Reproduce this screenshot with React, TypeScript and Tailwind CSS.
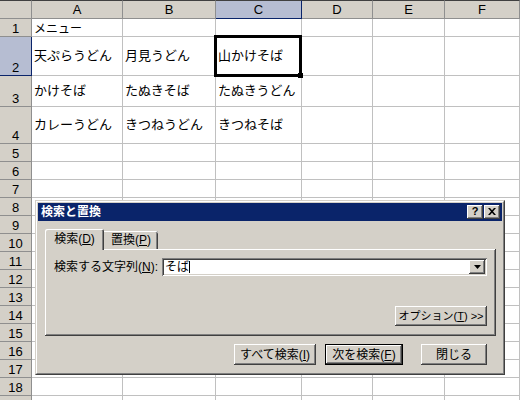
import { Fragment } from "react";

// シート設定
const COLS = ["A", "B", "C", "D", "E", "F"];
const ROWS = Array.from({ length: 19 }, (_, i) => i + 1);
const DATA: Record<number, string[]> = {
  1: ["メニュー"],
  2: ["天ぷらうどん", "月見うどん", "山かけそば"],
  3: ["かけそば", "たぬきそば", "たぬきうどん"],
  4: ["カレーうどん", "きつねうどん", "きつねそば"],
};

const RAISED = "shadow-[inset_-1px_-1px_0_#404040,inset_1px_1px_0_#fff,inset_-2px_-2px_0_#808080]";
const DEFAULT_BTN =
  "shadow-[inset_0_0_0_1px_#000,inset_-2px_-2px_0_#404040,inset_2px_2px_0_#fff,inset_-3px_-3px_0_#808080]";

function Btn({ children, className = "", isDefault = false }: { children: React.ReactNode; className?: string; isDefault?: boolean }) {
  return (
    <div className={`flex items-center justify-center whitespace-nowrap bg-[#d4d0c8] text-black ${isDefault ? DEFAULT_BTN : RAISED} ${className}`}>
      {children}
    </div>
  );
}

export default function App() {
  return (
    <div
      className="relative w-[520px] h-[400px] overflow-hidden bg-white text-black"
      style={{ fontFamily: '"Liberation Sans", "Noto Sans CJK JP", sans-serif' }}
    >
      {/* シート */}
      <div className="grid grid-cols-[32px_91px_93px_86px_71px_72px_1fr] grid-rows-[19px_18px_39px_31px_37px_repeat(15,18px)]">
        <div className="bg-[#d4d0c8] border-t border-r border-b border-t-[#404040] border-r-[#8f8f8f] border-b-[#8f8f8f]" />
        {COLS.map((c) => (
          <div
            key={c}
            className={`flex items-center justify-center pt-[1px] text-[13px] border-t border-r border-b border-t-[#404040] ${
              c === "C" ? "bg-[#b6bdd2] border-r-[#0a246a] border-b-[#0a246a]" : "bg-[#d4d0c8] border-r-[#8f8f8f] border-b-[#8f8f8f]"
            }`}
          >
            {c}
          </div>
        ))}
        {ROWS.map((r) => (
          <Fragment key={r}>
            <div
              className={`flex items-end justify-center pb-[1px] text-[13px] leading-none border-r border-b ${
                r === 2 ? "bg-[#b6bdd2] border-r-[#0a246a] border-b-[#0a246a]" : "bg-[#d4d0c8] border-r-[#8f8f8f] border-b-[#8f8f8f]"
              }`}
            >
              {r < 19 ? r : ""}
            </div>
            {COLS.map((c, i) => (
              <div
                key={c}
                className={`flex items-center pl-[2px] whitespace-nowrap overflow-hidden border-r border-b border-[#c0c0c0] ${
                  r === 1 ? "text-[12px] pt-[2px]" : "text-[13px]"
                }`}
              >
                {DATA[r]?.[i] ?? ""}
              </div>
            ))}
          </Fragment>
        ))}
      </div>

      {/* 選択セル */}
      <div className="absolute left-[214px] top-[35px] w-[88px] h-[42px] border-[3px] border-black pointer-events-none" />
      <div className="absolute left-[298px] top-[73px] w-[5px] h-[5px] bg-black" />

      {/* 検索と置換 ダイアログ */}
      <div className="absolute left-[35px] top-[200px] w-[470px] h-[175px] bg-[#d4d0c8] border border-t-[#d4d0c8] border-l-[#d4d0c8] border-r-[#404040] border-b-[#404040]">
        <div className="h-full border border-t-white border-l-white border-r-[#808080] border-b-[#808080] p-px flex flex-col">
          {/* タイトルバー */}
          <div className="h-[18px] bg-[#0a246a] flex items-center justify-between pl-[3px] pr-[2px]">
            <span className="text-white font-bold text-[12px] leading-none">検索と置換</span>
            <div className="flex gap-[1px]">
              <Btn className="w-[16px] h-[14px]">
                <span className="font-bold text-[11px] leading-none -mt-px">?</span>
              </Btn>
              <Btn className="w-[16px] h-[14px]">
                <svg width="8" height="7" viewBox="0 0 8 7" className="-mt-px">
                  <path d="M0 0h2l2 2.2L6 0h2L5 3.5 8 7H6L4 4.8 2 7H0l3-3.5z" fill="#000" />
                </svg>
              </Btn>
            </div>
          </div>

          {/* タブ */}
          <div className="ml-[7px] mr-[6px] mt-[8px]">
            <div className="flex items-end -mb-px relative z-10">
              <div className="h-[21px] w-[59px] flex items-center justify-center pb-[2px] text-[12px] bg-[#d4d0c8] rounded-tl-[2px] rounded-tr-[2px] shadow-[inset_1px_1px_0_#fff,inset_-1px_0_0_#404040,inset_-2px_0_0_#808080]">
                検索(<span className="underline">D</span>)
              </div>
              <div className="h-[18px] w-[54px] mb-px flex items-center justify-center text-[12px] rounded-tr-[2px] shadow-[inset_0_1px_0_#fff,inset_-1px_0_0_#404040,inset_-2px_0_0_#808080]">
                置換(<span className="underline">P</span>)
              </div>
            </div>
            <div className={`h-[87px] px-[9px] pt-[9px] flex flex-col ${RAISED}`}>
              <div className="flex items-center h-[18px]">
                <span className="w-[108px] text-[12px] leading-none whitespace-nowrap">
                  検索する文字列(<span className="underline">N</span>):
                </span>
                <div className="flex-1 h-[18px] bg-white flex items-center pl-[3px] pr-[2px] shadow-[inset_1px_1px_0_#808080,inset_-1px_-1px_0_#fff,inset_2px_2px_0_#404040,inset_-2px_-2px_0_#d4d0c8]">
                  <span className="text-[12px] leading-none">そば</span>
                  <span className="w-px h-[12px] bg-black" />
                  <div className="flex-1" />
                  <Btn className="w-[16px] h-[14px]">
                    <svg width="7" height="4" viewBox="0 0 7 4">
                      <path d="M0 0h7L3.5 4z" fill="#000" />
                    </svg>
                  </Btn>
                </div>
              </div>
              <div className="flex justify-end mt-[30px]">
                <Btn className="w-[92px] h-[20px] text-[11px]">
                  オプション(<span className="underline">T</span>) &gt;&gt;
                </Btn>
              </div>
            </div>
          </div>

          {/* ボタン */}
          <div className="flex justify-end items-center mt-[8px] pr-[15px] text-[12px]">
            <Btn className="w-[82px] h-[21px]">
              すべて検索(<span className="underline">I</span>)
            </Btn>
            <Btn isDefault className="w-[78px] h-[21px] ml-[9px]">
              次を検索(<span className="underline">F</span>)
            </Btn>
            <Btn className="w-[66px] h-[21px] ml-[18px]">閉じる</Btn>
          </div>
        </div>
      </div>
    </div>
  );
}
